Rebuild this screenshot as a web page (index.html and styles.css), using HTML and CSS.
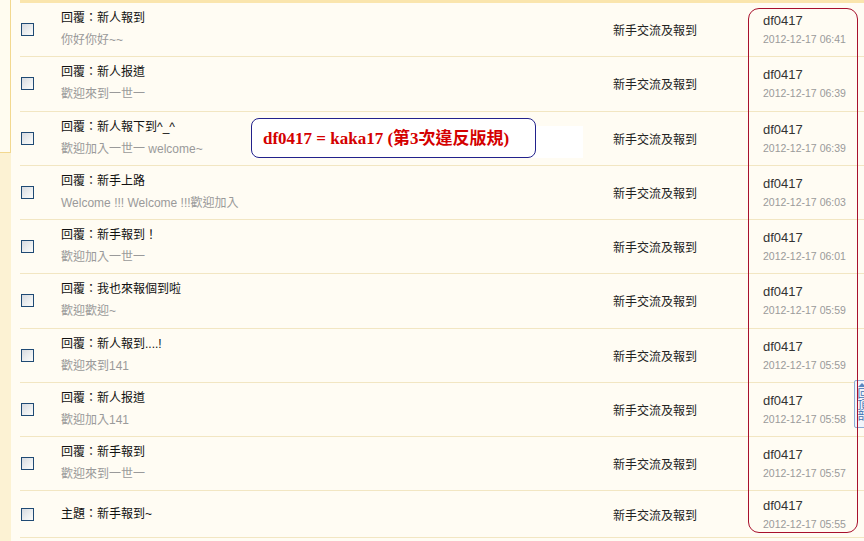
FILE: index.html
```html
<!DOCTYPE html>
<html lang="zh-Hant">
<head>
<meta charset="utf-8">
<title>新手交流及報到</title>
<link rel="stylesheet" href="styles.css">
</head>
<body>
<div class="page">
  <aside class="side"><div class="side-panel"></div></aside>
  <main class="main">
    <div class="topbar"></div>
    <ul class="list">
      <li class="row">
        <div class="cell-check"><span class="check"></span></div>
        <div class="cell-title"><div class="title">回覆：新人報到</div><div class="sub">你好你好~~</div></div>
        <div class="cell-forum">新手交流及報到</div>
        <div class="cell-author"><div class="name">df0417</div><div class="date">2012-12-17 06:41</div></div>
      </li>
      <li class="row">
        <div class="cell-check"><span class="check"></span></div>
        <div class="cell-title"><div class="title">回覆：新人报道</div><div class="sub">歡迎來到一世一</div></div>
        <div class="cell-forum">新手交流及報到</div>
        <div class="cell-author"><div class="name">df0417</div><div class="date">2012-12-17 06:39</div></div>
      </li>
      <li class="row">
        <div class="cell-check"><span class="check"></span></div>
        <div class="cell-title"><div class="title">回覆：新人報下到^_^</div><div class="sub">歡迎加入一世一 welcome~</div></div>
        <div class="cell-forum">新手交流及報到</div>
        <div class="cell-author"><div class="name">df0417</div><div class="date">2012-12-17 06:39</div></div>
      </li>
      <li class="row">
        <div class="cell-check"><span class="check"></span></div>
        <div class="cell-title"><div class="title">回覆：新手上路</div><div class="sub">Welcome !!! Welcome !!!歡迎加入</div></div>
        <div class="cell-forum">新手交流及報到</div>
        <div class="cell-author"><div class="name">df0417</div><div class="date">2012-12-17 06:03</div></div>
      </li>
      <li class="row">
        <div class="cell-check"><span class="check"></span></div>
        <div class="cell-title"><div class="title">回覆：新手報到！</div><div class="sub">歡迎加入一世一</div></div>
        <div class="cell-forum">新手交流及報到</div>
        <div class="cell-author"><div class="name">df0417</div><div class="date">2012-12-17 06:01</div></div>
      </li>
      <li class="row">
        <div class="cell-check"><span class="check"></span></div>
        <div class="cell-title"><div class="title">回覆：我也來報個到啦</div><div class="sub">歡迎歡迎~</div></div>
        <div class="cell-forum">新手交流及報到</div>
        <div class="cell-author"><div class="name">df0417</div><div class="date">2012-12-17 05:59</div></div>
      </li>
      <li class="row">
        <div class="cell-check"><span class="check"></span></div>
        <div class="cell-title"><div class="title">回覆：新人報到....!</div><div class="sub">歡迎來到141</div></div>
        <div class="cell-forum">新手交流及報到</div>
        <div class="cell-author"><div class="name">df0417</div><div class="date">2012-12-17 05:59</div></div>
      </li>
      <li class="row">
        <div class="cell-check"><span class="check"></span></div>
        <div class="cell-title"><div class="title">回覆：新人报道</div><div class="sub">歡迎加入141</div></div>
        <div class="cell-forum">新手交流及報到</div>
        <div class="cell-author"><div class="name">df0417</div><div class="date">2012-12-17 05:58</div></div>
      </li>
      <li class="row">
        <div class="cell-check"><span class="check"></span></div>
        <div class="cell-title"><div class="title">回覆：新手報到</div><div class="sub">歡迎來到一世一</div></div>
        <div class="cell-forum">新手交流及報到</div>
        <div class="cell-author"><div class="name">df0417</div><div class="date">2012-12-17 05:57</div></div>
      </li>
      <li class="row row-single">
        <div class="cell-check"><span class="check"></span></div>
        <div class="cell-title"><div class="title">主題：新手報到~</div></div>
        <div class="cell-forum">新手交流及報到</div>
        <div class="cell-author"><div class="name">df0417</div><div class="date">2012-12-17 05:55</div></div>
      </li>
    </ul>
  </main>
</div>
<div class="note-bg"></div>
<div class="note">df0417 = kaka17 (第3次違反版規)</div>
<div class="totop"><span class="totop-arrow"></span><span class="totop-text">回頂部</span></div>
<div class="author-frame"></div>
</body>
</html>
```
FILE: styles.css
```css
html, body {
  margin: 0;
  padding: 0;
}
body {
  width: 864px;
  height: 541px;
  overflow: hidden;
  background: #fffcf3;
  font-family: "Liberation Sans", "Noto Sans CJK TC", sans-serif;
  font-size: 12px;
  color: #111;
  position: relative;
}
.page {
  display: flex;
  align-items: stretch;
  min-height: 541px;
}
.side {
  flex: none;
  width: 11px;
  background: #fcf2d3;
}
.side-panel {
  box-sizing: border-box;
  height: 153px;
  background: #fffcf0;
  border-right: 1px solid #f2d890;
  border-bottom: 1px solid #f2d890;
}
.main {
  flex: 1;
  min-width: 0;
  padding-left: 9px;
  overflow: hidden;
}
.topbar {
  height: 3px;
  background: #fae5ad;
}
.list {
  list-style: none;
  margin: 0;
  padding: 0;
  width: 860px;
}
.row {
  display: grid;
  grid-template-columns: 41px 552px 150px 1fr;
  border-bottom: 1px solid #f2e6c2;
}
.cell-check {
  align-self: center;
  padding-left: 1px;
}
.check {
  display: block;
  width: 11px;
  height: 11px;
  border: 1px solid #1f4a74;
  background: linear-gradient(135deg, #d6dae0 0%, #eef0f1 60%, #fbfbf9 100%);
}
.cell-title {
  padding: 4px 0 5.25px;
  line-height: 22px;
}
.row-single .cell-title {
  padding: 12px 0;
}
.title {
  color: #111;
}
.sub {
  color: #9a9a9a;
}
.cell-forum {
  align-self: center;
  color: #222;
}
.cell-author {
  align-self: center;
  line-height: 19px;
  padding-top: 1px;
}
.name {
  font-size: 13px;
  color: #333;
}
.date {
  font-size: 10.5px;
  color: #9a9a9a;
}
.note-bg {
  position: absolute;
  left: 251px;
  top: 126px;
  width: 332px;
  height: 32px;
  background: #ffffff;
}
.note {
  position: absolute;
  left: 251px;
  top: 118px;
  width: 285px;
  height: 40px;
  box-sizing: border-box;
  padding: 0 0 3px 11px;
  display: flex;
  align-items: center;
  border: 1px solid #22228c;
  border-radius: 8px;
  background: #ffffff;
  color: #d40000;
  font-family: "Liberation Serif", "Noto Sans CJK TC", serif;
  font-weight: bold;
  font-size: 17px;
  white-space: nowrap;
}
.author-frame {
  position: absolute;
  left: 748px;
  top: 8px;
  width: 110px;
  height: 525px;
  box-sizing: border-box;
  border: 1.5px solid #a8102c;
  border-radius: 11px;
  pointer-events: none;
}
.totop {
  position: absolute;
  left: 854px;
  top: 380px;
  width: 16px;
  height: 48px;
  box-sizing: border-box;
  border: 1px solid #8caad4;
  border-radius: 2px;
  background: #f1f5fb;
  display: flex;
  flex-direction: column;
  align-items: center;
  padding-top: 2px;
}
.totop-arrow {
  width: 0;
  height: 0;
  border-left: 4px solid transparent;
  border-right: 4px solid transparent;
  border-bottom: 4px solid #5b86c0;
}
.totop-text {
  writing-mode: vertical-rl;
  font-size: 11px;
  line-height: 12px;
  color: #4170b0;
  margin-top: 1px;
}
```
